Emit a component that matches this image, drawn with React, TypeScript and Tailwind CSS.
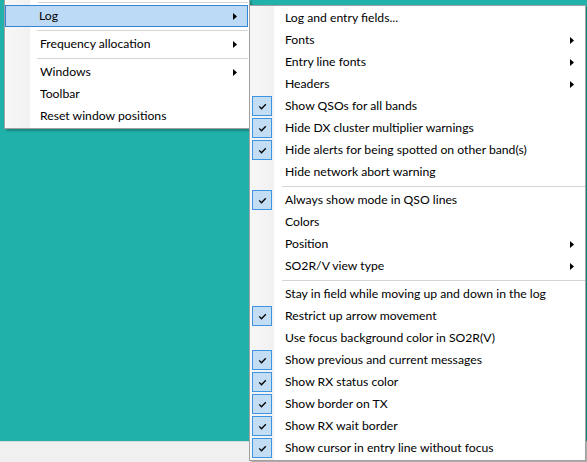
import { type ReactNode } from 'react'

type Item =
  | { kind: 'sep' }
  | { kind: 'item'; label: string; checked?: boolean; sub?: boolean }

const LEFT_ITEMS: Item[] = [
  { kind: 'item', label: 'Log', sub: true },
  { kind: 'sep' },
  { kind: 'item', label: 'Frequency allocation', sub: true },
  { kind: 'sep' },
  { kind: 'item', label: 'Windows', sub: true },
  { kind: 'item', label: 'Toolbar' },
  { kind: 'item', label: 'Reset window positions' },
]

const LOG_ITEMS: Item[] = [
  { kind: 'item', label: 'Log and entry fields...' },
  { kind: 'item', label: 'Fonts', sub: true },
  { kind: 'item', label: 'Entry line fonts', sub: true },
  { kind: 'item', label: 'Headers', sub: true },
  { kind: 'item', label: 'Show QSOs for all bands', checked: true },
  { kind: 'item', label: 'Hide DX cluster multiplier warnings', checked: true },
  { kind: 'item', label: 'Hide alerts for being spotted on other band(s)', checked: true },
  { kind: 'item', label: 'Hide network abort warning' },
  { kind: 'sep' },
  { kind: 'item', label: 'Always show mode in QSO lines', checked: true },
  { kind: 'item', label: 'Colors' },
  { kind: 'item', label: 'Position', sub: true },
  { kind: 'item', label: 'SO2R/V view type', sub: true },
  { kind: 'sep' },
  { kind: 'item', label: 'Stay in field while moving up and down in the log' },
  { kind: 'item', label: 'Restrict up arrow movement', checked: true },
  { kind: 'item', label: 'Use focus background color in SO2R(V)' },
  { kind: 'item', label: 'Show previous and current messages', checked: true },
  { kind: 'item', label: 'Show RX status color', checked: true },
  { kind: 'item', label: 'Show border on TX', checked: true },
  { kind: 'item', label: 'Show RX wait border', checked: true },
  { kind: 'item', label: 'Show cursor in entry line without focus', checked: true },
]

function Arrow() {
  return (
    <svg width="4" height="7" viewBox="0 0 4 7" className="shrink-0">
      <polygon points="0,0 4,3.5 0,7" fill="#000" />
    </svg>
  )
}

function Check() {
  return (
    <span className="absolute left-[2px] top-[1px] w-[20px] h-[20px] border border-[#3d94e0] bg-[#c2ddf4] flex items-center justify-center">
      <svg width="9" height="7" viewBox="0 0 9 7">
        <path d="M1.2 3.4 L3.5 5.7 L7.8 1.2" fill="none" stroke="#000" strokeWidth="1.3" />
      </svg>
    </span>
  )
}

function Separator() {
  return (
    <div className="h-[6px] flex items-center pl-[32px]">
      <div className="h-px w-full bg-[#d5d5d5]" />
    </div>
  )
}

function Row({ item, active }: { item: Extract<Item, { kind: 'item' }>; active?: boolean }) {
  return (
    <div
      className={
        active
          ? 'relative h-[22px] flex items-center pl-[33px] pr-[10px] bg-[#bcdaf5] border border-[#2f86d8]'
          : 'relative h-[22px] flex items-center pl-[35px] pr-[11px]'
      }
    >
      {item.checked && <Check />}
      <span className="flex-1 whitespace-nowrap">{item.label}</span>
      {item.sub && <Arrow />}
    </div>
  )
}

function Menu({ items, activeIndex, className }: { items: Item[]; activeIndex?: number; className: string }): ReactNode {
  return (
    <div className={className}>
      {items.map((it, i) =>
        it.kind === 'sep' ? <Separator key={i} /> : <Row key={i} item={it} active={i === activeIndex} />,
      )}
    </div>
  )
}

export default function App() {
  return (
    <div
      className="relative w-[587px] h-[462px] overflow-hidden flex flex-col text-[12.2px] text-black"
      style={{ fontFamily: '"Segoe UI", Lato, "Noto Sans", sans-serif' }}
    >
      <div className="flex-1 bg-[#20b2aa]" />
      <div className="h-[21px] bg-[#f0f0f0] border-t border-[#dcdcdc]" />

      {/* parent menu, top is scrolled off above the window */}
      <div className="absolute left-[4px] top-[-1px] w-[246px] bg-white border border-[#a0a0a0] border-t-0 shadow-[2px_2px_2px_rgba(0,0,0,0.25)]">
        <div className="absolute left-[1px] top-0 bottom-0 w-[24px] bg-gradient-to-r from-[#f7f7f7] to-[#f1f1f1]" />
        <div className="relative px-px pb-px">
          <Separator />
          <Menu items={LEFT_ITEMS} activeIndex={0} className="-ml-px" />
        </div>
      </div>

      {/* Log submenu */}
      <div className="absolute left-[249px] top-[5px] w-[337px] bg-white border border-[#a0a0a0] shadow-[2px_2px_2px_rgba(0,0,0,0.3)]">
        <div className="absolute left-0 top-0 bottom-0 w-[24px] bg-gradient-to-r from-[#f7f7f7] to-[#f1f1f1]" />
        <Menu items={LOG_ITEMS} className="relative py-px" />
      </div>
    </div>
  )
}
